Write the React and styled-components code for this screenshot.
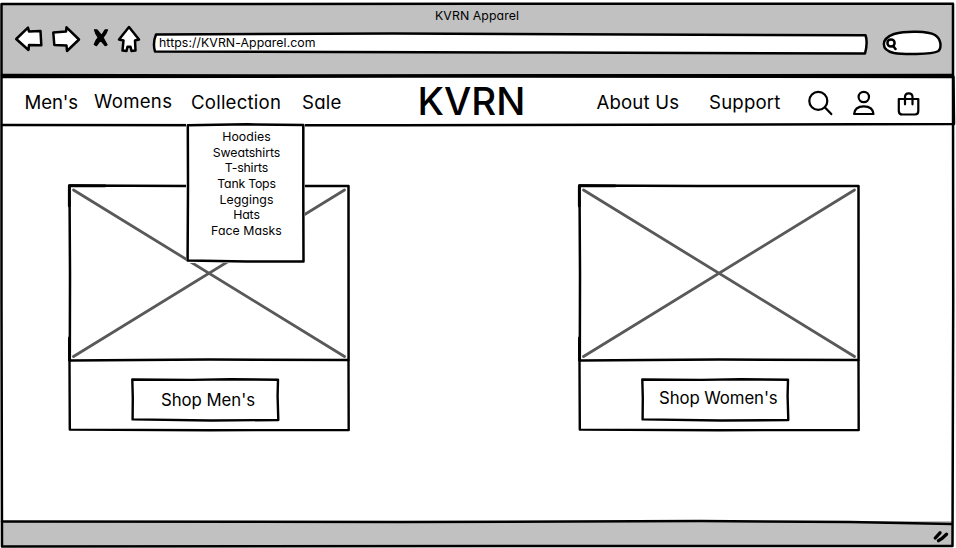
import React from "react";
import styled, { createGlobalStyle } from "styled-components";

const INK = "#000";

const GlobalStyle = createGlobalStyle`
  *, *::before, *::after { box-sizing: border-box; }
  body { margin: 0; background: #fff; overflow: hidden; }
`;

const Window = styled.div`
  position: relative;
  display: grid;
  grid-template-rows: 76px 50px 1fr 27px;
  width: 956px;
  height: 548px;
  color: ${INK};
  font-family: Inter, "Open Sans", sans-serif;
  font-feature-settings: "cv11", "ss03";
`;

const Outline = styled.svg`
  position: absolute;
  inset: 0;
  width: 100%;
  height: 100%;
  overflow: visible;
  fill: ${(p) => p.$fill || "none"};
  stroke: ${INK};
  stroke-width: ${(p) => p.$weight || 2.5};
  stroke-linejoin: round;
  stroke-linecap: round;
  pointer-events: none;
`;

const Chrome = styled.header`
  display: grid;
  grid-template-rows: 20px 1fr;
  margin: 3px 3px 0 2px;
  background: #c1c1c1;
`;

const Title = styled.div`
  height: 20px;
  padding-left: 433px;
  font-size: 12.3px;
  line-height: 26px;
  letter-spacing: 0.08px;
  white-space: nowrap;
`;

const Toolbar = styled.div`
  display: flex;
  align-items: flex-start;
`;

const ToolIcon = styled.svg`
  flex: none;
  width: ${(p) => p.$w}px;
  height: 32px;
  margin-left: ${(p) => p.$gap}px;
  overflow: visible;
  fill: #fff;
  stroke: ${INK};
  stroke-width: 2.5;
  stroke-linejoin: round;
  stroke-linecap: round;
`;

const Address = styled.div`
  position: relative;
  width: 715px;
  height: 21px;
  margin: 10px 0 0 13px;
  padding-left: 6px;
  font-size: 12.3px;
  line-height: 20px;
`;

const Layer = styled.span`
  position: relative;
  letter-spacing: ${(p) => p.$track || 0}px;
  white-space: nowrap;
`;

const SearchPill = styled.div`
  position: relative;
  width: 60px;
  height: 25px;
  margin: 8px 0 0 14px;
`;

const Nav = styled.nav`
  display: flex;
  align-items: flex-start;
  padding-left: 24.5px;
`;

const NavLink = styled.a`
  flex: none;
  width: ${(p) => p.$w}px;
  margin-top: ${(p) => p.$top || 13}px;
  font-size: 18.6px;
  line-height: 26px;
  letter-spacing: ${(p) => p.$track || 0}px;
  white-space: nowrap;
`;

const Brand = styled.a`
  flex: none;
  width: 179px;
  margin-top: 2px;
  font-size: 38.5px;
  line-height: 46px;
  font-weight: 500;
`;

const NavIcon = styled.svg`
  flex: none;
  width: 26px;
  height: 28px;
  margin: 14px 18.5px 0 0;
  overflow: visible;
  fill: none;
  stroke: ${INK};
  stroke-width: 2.2;
  stroke-linejoin: round;
  stroke-linecap: round;
`;

const Main = styled.main`
  display: grid;
  grid-template-columns: 281px 281px;
  column-gap: 229px;
  align-content: start;
  padding: 58px 0 0 69px;
`;

const Card = styled.section`
  position: relative;
  display: grid;
  grid-template-rows: 176px 71px;
  height: 247px;
`;

const Photo = styled.div`
  position: relative;
`;

const CardFooter = styled.div`
  display: flex;
  justify-content: center;
  align-items: flex-start;
  padding: 18px 9px 0 0;
`;

const ShopButton = styled.button`
  position: relative;
  width: 148px;
  height: 43px;
  padding: ${(p) => p.$pad};
  border: 0;
  background: #fff;
  color: inherit;
  font: inherit;
  font-size: 16.8px;
  line-height: 26px;
  text-align: left;
  font-feature-settings: inherit;
`;

const Menu = styled.ul`
  position: absolute;
  left: 187px;
  top: 124px;
  width: 117px;
  height: 138px;
  margin: 0;
  padding: 5px 0 0 2px;
  background: #fff;
  box-shadow: 0 0 0 1px #fff;
  list-style: none;
  text-align: center;
`;

const MenuItem = styled.li`
  position: relative;
  font-size: 12.3px;
  line-height: 15.65px;
  letter-spacing: ${(p) => p.$track || 0}px;
  white-space: nowrap;
`;

const Footer = styled.footer`
  display: flex;
  justify-content: flex-end;
  margin: 0 3px 2px 2px;
  background: #c1c1c1;
`;

const Grip = styled.svg`
  width: 18px;
  height: 14px;
  margin: 9px 2px 0 0;
  fill: none;
  stroke: ${INK};
  stroke-width: 3.3;
  stroke-linecap: round;
`;

const items = [
  { name: "Hoodies", track: 0.08 },
  { name: "Sweatshirts", track: -0.08 },
  { name: "T-shirts", track: -0.15 },
  { name: "Tank Tops", track: -0.22 },
  { name: "Leggings", track: 0.05 },
  { name: "Hats", track: -0.1 },
  { name: "Face Masks", track: 0.05 },
];

function ProductCard({ label, pad, track }) {
  return (
    <Card>
      <Outline viewBox="0 0 281 247" $weight={2.4}>
        <path d="M.5 177L.8 245.600L140 246.200L279.700 246L279.500 177" />
      </Outline>
      <Photo>
        <Outline viewBox="0 0 281 176" $weight={2.5}>
          <path d="M.5 1.500L120 2L279.500 2L279.600 176L140 175.600L.8 176.400L1 90Z" />
          <path d="M.5 1.700L36 1.900M.3 2V22M.4 154V176" strokeWidth="2.800" />
          <path d="M4.500 6L275.500 172.500M275.500 6L4.500 172.500" stroke="#595959" strokeWidth="2.800" />
        </Outline>
      </Photo>
      <CardFooter>
        <ShopButton $pad={pad}>
          <Outline viewBox="0 0 148 43" $weight={2.4}>
            <path d="M1.300 1.500L60 1.900L100 1.300L147 1.700L146.600 18L147.300 42L80 42.500L1.600 41.400L1.800 20Z" />
          </Outline>
          <Layer $track={track}>{label}</Layer>
        </ShopButton>
      </CardFooter>
    </Card>
  );
}

export default function App() {
  return (
    <>
      <GlobalStyle />
      <Window>
        <Chrome>
          <Title>KVRN Apparel</Title>
          <Toolbar>
            <ToolIcon $w={28} $gap={13} viewBox="0 0 28 32">
              <path d="M1.200 16L13 4.700L14 8.500L25.500 8L26.300 22.300L14 22L13.500 27Z" />
            </ToolIcon>
            <ToolIcon $w={28} $gap={9} viewBox="0 0 28 32">
              <path d="M1.300 9.500L14 8.600L14.500 4.300L27 16.500L15 28L14.500 22.500L2.300 22Z" />
            </ToolIcon>
            <ToolIcon $w={18} $gap={12} viewBox="0 0 18 32">
              <path
                d="M2.500 6.800L5 7L9.500 12.500L13 7L15.500 6.800Q14 11.500 11 14.500L15 21.800L13.200 22.700L8.500 17.200L4.500 22.700L2.300 21.500Q3.500 17.500 6.300 14.500Q3.500 11 2.500 6.800Z"
                fill="#000"
                strokeWidth="1.300"
              />
            </ToolIcon>
            <ToolIcon $w={22} $gap={8} viewBox="0 0 22 32">
              <path d="M11 4L1 16.500L5.500 17.500L4.500 27.500L8.500 28L9.500 23.800L12.500 23.800L13.500 28L17.500 27.500L17 17.500L21 16.500Z" />
            </ToolIcon>
            <Address>
              <Outline viewBox="0 0 715 21" $fill="#fff">
                <path d="M3 1.500L240 .5L480 1.500L712.500 2.300Q715 9 712 20.500L400 19.500L2 18.500Q-.5 10 3 1.500Z" />
              </Outline>
              <Layer $track={0.07}>https://KVRN-Apparel.com</Layer>
            </Address>
            <SearchPill>
              <Outline viewBox="0 0 60 25" $fill="#fff">
                <path d="M12 3C25 -.5 46 .3 53 4C59 8 60 16 56.500 20C49 24 20 23.500 12 22C-1.500 19 -1.500 8 12 3Z" />
                <circle cx="9" cy="12" r="3.600" />
                <path d="M11.500 15.500L13.500 18" />
              </Outline>
            </SearchPill>
          </Toolbar>
        </Chrome>
        <Nav>
          <NavLink $w={69.5} $track={-0.1}>Men's</NavLink>
          <NavLink $w={97} $top={12} $track={0.3}>Womens</NavLink>
          <NavLink $w={111} $track={0.22}>Collection</NavLink>
          <NavLink $w={115.5} $track={0.25}>Sale</NavLink>
          <Brand>KVRN</Brand>
          <NavLink $w={112.5} $track={0.16}>About Us</NavLink>
          <NavLink $w={97.5} $track={0.2}>Support</NavLink>
          <NavIcon viewBox="0 0 26 28">
            <circle cx="11.300" cy="10.900" r="9" />
            <path d="M18 17.500L24.300 24.100" />
          </NavIcon>
          <NavIcon viewBox="0 0 26 28">
            <circle cx="12.800" cy="7" r="5.200" />
            <path d="M3.100 24C3.500 18.500 7.300 16.300 12.800 16.300C18.300 16.300 22.100 18.500 22.500 24Z" />
          </NavIcon>
          <NavIcon viewBox="0 0 26 28">
            <path d="M2.800 9H22.300V21Q22.300 24.500 19 24.500H6.300Q2.800 24.500 2.800 21ZM9 14.300V7Q9 3.400 12.700 3.400Q16.500 3.400 16.500 7V14.300" />
          </NavIcon>
        </Nav>
        <Main>
          <ProductCard label="Shop Men's" pad="9px 0 8px 30px" track={-0.05} />
          <ProductCard label="Shop Women's" pad="7px 0 10px 18px" track={-0.1} />
        </Main>
        <Footer>
          <Grip viewBox="0 0 18 14">
            <path d="M2.300 8L7 2.800M5.500 10.700L9 8.500L13.500 4.200" />
          </Grip>
        </Footer>
        <Outline viewBox="0 0 956 548">
          <path d="M1.500 4L480 3.800L953 3.800L953 77L953.200 300L952.500 546L600 546L2 546.500L1.500 300Z" />
          <path d="M2 75L300 75.500L953 75M2 77L400 76.500L953.500 77L954 124L400 125.300L2 125" />
          <path d="M2 521.500L400 522L700 521L850 522L952 524" />
        </Outline>
        <Menu>
          <Outline viewBox="0 0 117 138">
            <path d="M.8 1.200L60 .3L116.300 1L116.300 70L116.500 137.500L60 137.600L.6 136.500L1 60Z" />
          </Outline>
          {items.map((item) => (
            <MenuItem key={item.name} $track={item.track}>
              {item.name}
            </MenuItem>
          ))}
        </Menu>
      </Window>
    </>
  );
}
